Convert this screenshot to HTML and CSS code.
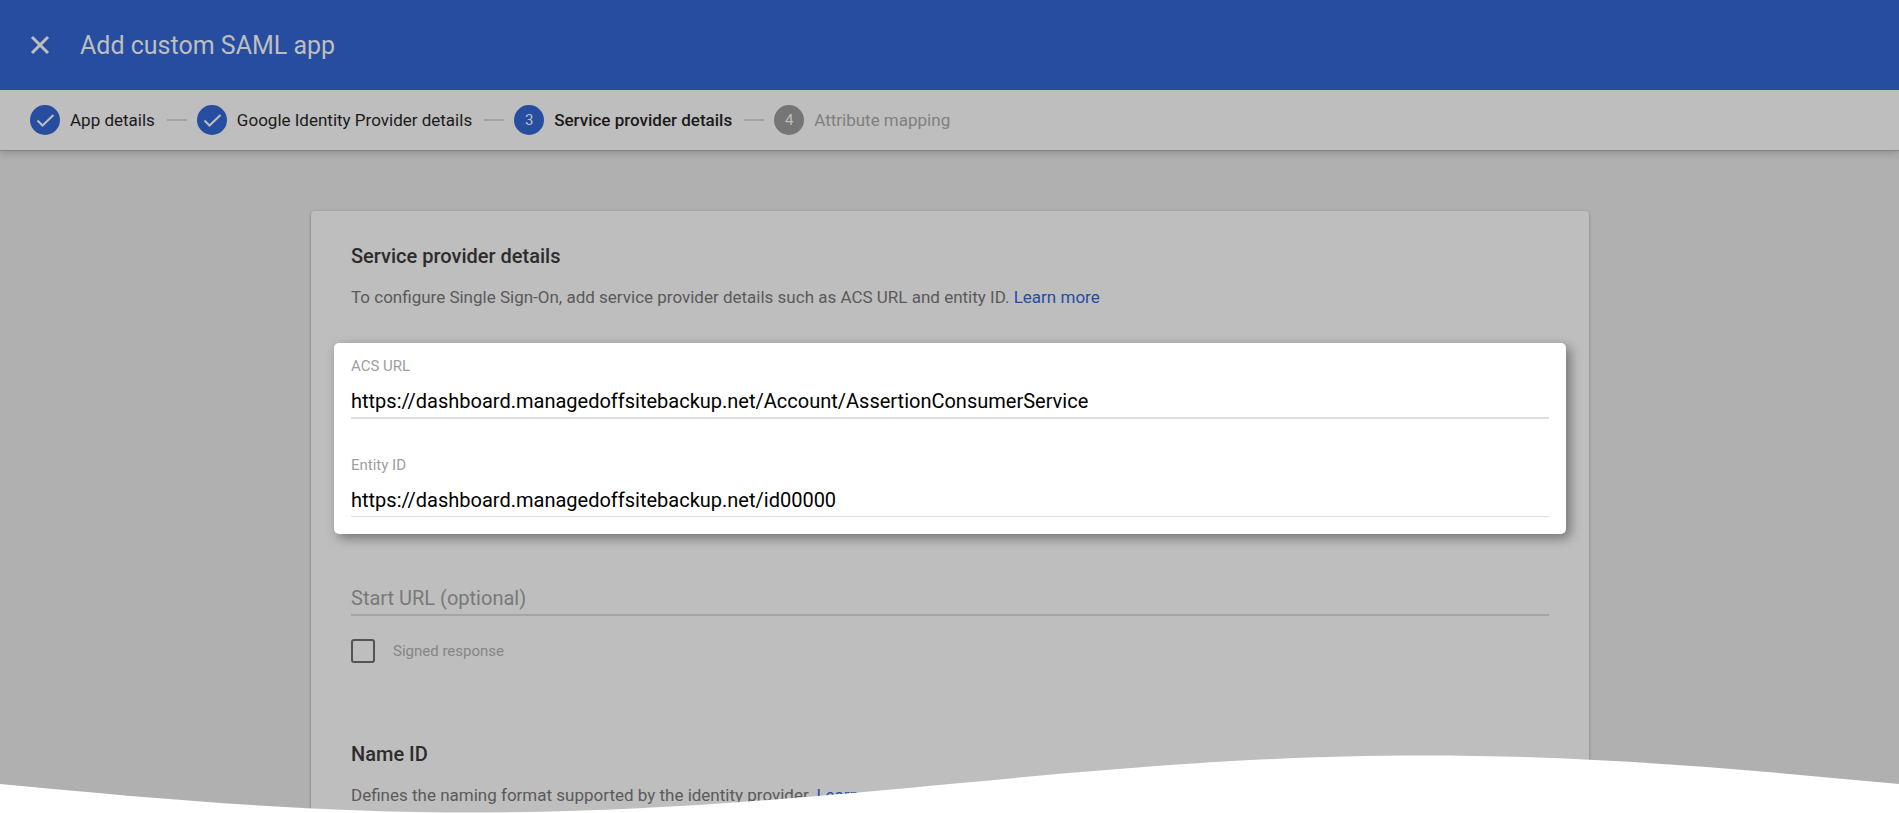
FILE: index.html
```html
<!DOCTYPE html>
<html lang="en">
<head>
    <meta charset="UTF-8">
    <meta name="viewport" content="width=device-width, initial-scale=1.0">
    <title>Add custom SAML app</title>
    <link rel="stylesheet" href="styles.css">
</head>
<body>
    <header class="header">
        <button class="close-button" type="button" aria-label="Close">
            <svg width="20" height="20" viewBox="0 0 20 20"><path d="M2 2L18 18M18 2L2 18"/></svg>
        </button>
        <h1 class="header-title">Add custom SAML app</h1>
    </header>

    <ol class="stepper">
        <li class="step">
            <span class="step-circle">
                <svg width="30" height="30" viewBox="0 0 30 30"><path d="M7.5 15.5L12.500 20.5L23.5 10"/></svg>
            </span>
            <span class="step-label">App details</span>
        </li>
        <li class="step">
            <span class="step-circle">
                <svg width="30" height="30" viewBox="0 0 30 30"><path d="M7.5 15.5L12.500 20.5L23.5 10"/></svg>
            </span>
            <span class="step-label">Google Identity Provider details</span>
        </li>
        <li class="step step-current">
            <span class="step-circle">3</span>
            <span class="step-label">Service provider details</span>
        </li>
        <li class="step step-upcoming">
            <span class="step-circle">4</span>
            <span class="step-label">Attribute mapping</span>
        </li>
    </ol>

    <main class="content">
        <form class="card">
            <section class="section">
                <h2 class="section-title">Service provider details</h2>
                <p class="section-text">To configure Single Sign-On, add service provider details such as ACS URL and entity ID. <a href="#">Learn more</a></p>
            </section>

            <div class="highlight">
                <div class="field">
                    <label class="field-label" for="acs-url">ACS URL</label>
                    <input class="field-input field-input-thick" id="acs-url" type="text" value="https://dashboard.managedoffsitebackup.net/Account/AssertionConsumerService">
                </div>
                <div class="field">
                    <label class="field-label" for="entity-id">Entity ID</label>
                    <input class="field-input" id="entity-id" type="text" value="https://dashboard.managedoffsitebackup.net/id00000">
                </div>
            </div>

            <input class="field-input field-input-thick start-url" type="text" placeholder="Start URL (optional)" aria-label="Start URL (optional)">

            <div class="check-row">
                <input class="checkbox" id="signed-response" type="checkbox">
                <label class="check-label" for="signed-response">Signed response</label>
            </div>

            <section class="section">
                <h2 class="section-title">Name ID</h2>
                <p class="section-text">Defines the naming format supported by the identity provider. <a href="#">Learn more</a></p>
            </section>
        </form>
    </main>

    <!-- Wavy bottom edge -->
    <svg class="wave" viewBox="0 0 1900 58" preserveAspectRatio="none" aria-hidden="true">
        <path d="M0 29C155 43.5 303 57.5 475 57.5S795 43.5 950 29S1253 0.5 1425 0.5S1745 14.5 1900 29V58H0Z"/>
    </svg>
</body>
</html>
```

FILE: styles.css
```css
* {
    box-sizing: border-box;
}
body {
    position: relative;
    display: flex;
    flex-direction: column;
    height: 100vh;
    margin: 0;
    overflow: hidden;
    background-color: #b0b0b0;
    font-family: Roboto, Arial, sans-serif;
}
.header {
    flex: none;
    display: flex;
    align-items: center;
    gap: 30px;
    height: 90px;
    padding: 0 30px;
    background-color: #264da0;
    color: #bebebe;
    z-index: 1;
}
.close-button {
    display: flex;
    padding: 0;
    border: none;
    background: none;
    color: inherit;
    cursor: pointer;
}
.close-button svg {
    fill: none;
    stroke: currentColor;
    stroke-width: 3;
}
.header-title {
    margin: 0;
    font-size: 25px;
    font-weight: 400;
}
.stepper {
    flex: none;
    display: flex;
    align-items: center;
    gap: 12px;
    height: 60px;
    margin: 0;
    padding: 0 30px;
    list-style: none;
    background-color: #bebebe;
    box-shadow: 0 1px 1px #868686, 0 3px 8px rgba(0, 0, 0, 0.2);
}
.step {
    display: flex;
    align-items: center;
    gap: 10px;
    color: #1a1a1a;
}
.step + .step::before {
    content: "";
    width: 20px;
    height: 2px;
    background-color: #a3a3a3;
}
.step-circle {
    display: flex;
    align-items: center;
    justify-content: center;
    width: 30px;
    height: 30px;
    border-radius: 50%;
    background-color: #264da0;
    color: #bebebe;
    font-size: 15px;
}
.step-circle svg {
    fill: none;
    stroke: currentColor;
    stroke-width: 2;
}
.step-label {
    font-size: 17px;
    line-height: 24px;
    white-space: nowrap;
}
.step-current .step-label {
    font-weight: 500;
}
.step-upcoming {
    color: #808080;
}
.step-upcoming .step-circle {
    background-color: #757575;
}
.content {
    flex: 1;
    display: flex;
    min-height: 0;
    padding: 61px 310px 0 311px;
}
.card {
    flex: 1;
    min-width: 0;
    padding: 33px 40px 0;
    border-radius: 4px 4px 0 0;
    background-color: #bebebe;
    box-shadow: 0 1px 3px rgba(0, 0, 0, 0.35);
}
.section-title {
    margin: 0;
    color: #2c2c2c;
    font-size: 20px;
    font-weight: 500;
    line-height: 24px;
}
.section-text {
    margin: 17px 0 0;
    color: #5a5a5a;
    font-size: 17px;
    line-height: 24px;
}
.section-text a {
    color: #264da0;
    text-decoration: none;
}
.highlight {
    display: grid;
    gap: 36px;
    margin: 34px -17px 0;
    padding: 13px 17px 17px;
    border-radius: 5px;
    background-color: #fff;
    box-shadow: 4px 4px 12px rgba(0, 0, 0, 0.4);
}
.field {
    display: flex;
    flex-direction: column;
    gap: 12px;
}
.field-label {
    color: #9e9e9e;
    font-size: 15px;
    line-height: 20px;
}
.field-input {
    box-sizing: content-box;
    width: 100%;
    height: 26px;
    padding: 0 0 3px;
    border: none;
    border-bottom: 1px solid #dedede;
    border-radius: 0;
    outline: none;
    background: none;
    color: #000;
    font-family: inherit;
    font-size: 20px;
}
.field-input-thick {
    border-bottom-width: 2px;
}
.start-url {
    display: block;
    margin-top: 51px;
    border-bottom-color: #a5a5a5;
}
.start-url::placeholder {
    color: #797979;
    opacity: 1;
}
.check-row {
    display: flex;
    align-items: center;
    gap: 18px;
    margin: 23px 0 79px;
}
.checkbox {
    width: 24px;
    height: 24px;
    margin: 0;
    appearance: none;
    border: 2px solid #545454;
    border-radius: 3px;
}
.checkbox:checked {
    background-color: #264da0;
}
.check-label {
    color: #858585;
    font-size: 15px;
    line-height: 20px;
}
.wave {
    position: absolute;
    bottom: 0;
    left: 0;
    width: 100%;
    height: 58px;
    fill: #fff;
}
```
